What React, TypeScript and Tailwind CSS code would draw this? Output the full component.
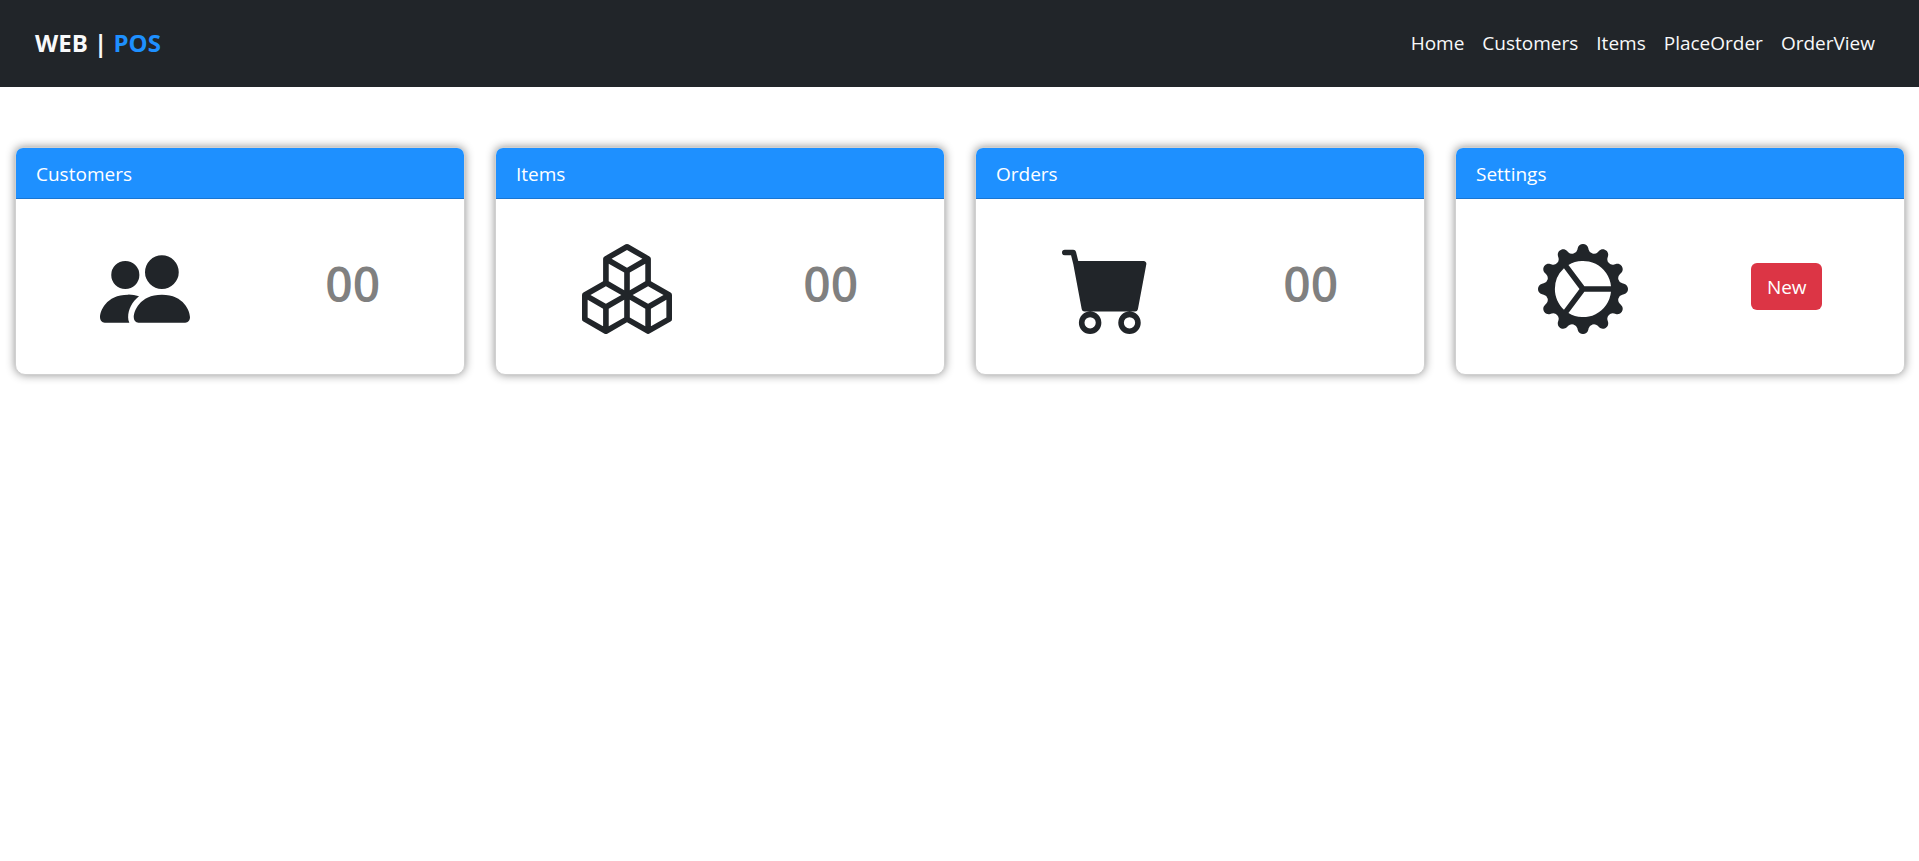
import type { ReactNode } from "react";
import { BsBoxes, BsCartFill, BsGearWideConnected, BsPeopleFill } from "react-icons/bs";

const links = ["Home", "Customers", "Items", "PlaceOrder", "OrderView"];

function Card({ title, roomy, children }: { title: string; roomy?: boolean; children: ReactNode }) {
  return (
    <section className="overflow-hidden rounded-t-lg rounded-b-[10px] border border-[#d0d0d0] bg-white shadow-[0_0_10px_#909090]">
      <h2 className="border-b border-[#1a76d2] bg-[#1e90ff] px-5 pt-[11px] pb-[9px] text-[19px] leading-[30px] text-white">
        {title}
      </h2>
      <div className={`flex h-[175px] items-center justify-around pt-1 ${roomy ? "px-5" : "px-4"}`}>{children}</div>
    </section>
  );
}

function Count({ value }: { value: string }) {
  return <p className="pb-2.5 text-5xl font-semibold text-[#808080]">{value}</p>;
}

export default function App() {
  return (
    <div className="min-h-screen bg-white font-['Open_Sans','Noto_Sans',sans-serif] text-[#212529]">
      <header className="flex h-[87px] items-center justify-between bg-[#212529] pr-11 pl-[35px] text-[#f8f9fa]">
        <h1 className="pb-0.5 text-2xl font-bold">
          WEB | <span className="text-[#1e90ff]">POS</span>
        </h1>
        <nav className="flex gap-[18px] text-[19px]">
          {links.map((link) => (
            <a key={link} href={`#${link.toLowerCase()}`}>
              {link}
            </a>
          ))}
        </nav>
      </header>
      <main className="grid grid-cols-4 gap-[30px] pt-[60px] pr-3.5 pl-[15px]">
        <Card title="Customers">
          <BsPeopleFill size={90} />
          <Count value="00" />
        </Card>
        <Card title="Items" roomy>
          <BsBoxes size={90} />
          <Count value="00" />
        </Card>
        <Card title="Orders" roomy>
          <BsCartFill size={90} />
          <Count value="00" />
        </Card>
        <Card title="Settings" roomy>
          <BsGearWideConnected size={90} />
          <button type="button" className="mb-1 h-[47px] w-[71px] rounded-md bg-[#dc3545] pt-0.5 text-[19px] text-white">
            New
          </button>
        </Card>
      </main>
    </div>
  );
}
